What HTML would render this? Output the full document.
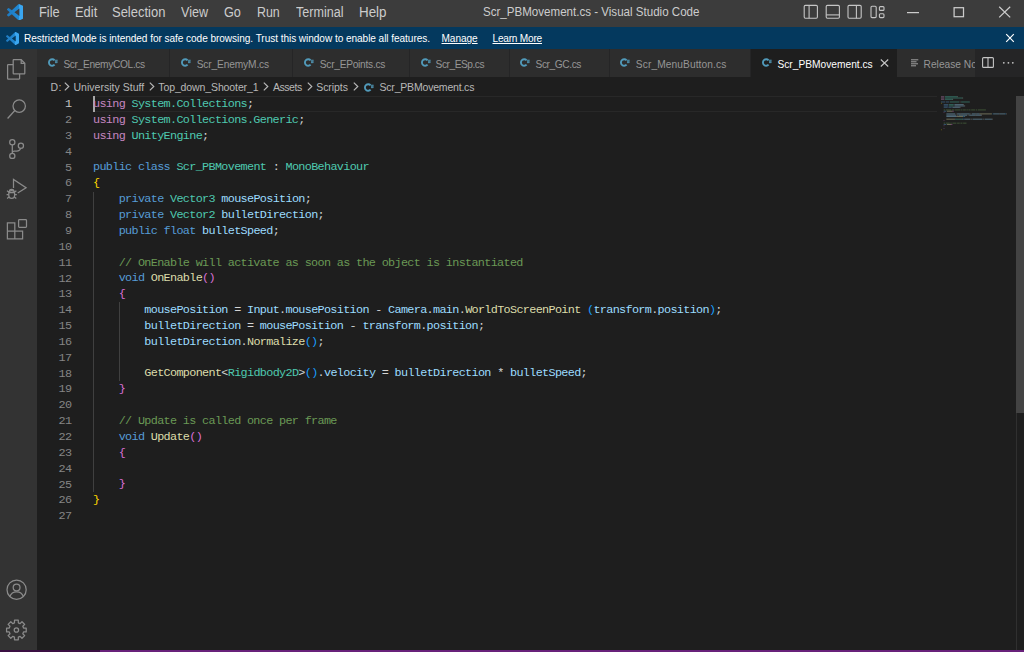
<!DOCTYPE html>
<html><head><meta charset="utf-8">
<style>
*{margin:0;padding:0;box-sizing:border-box}
html,body{width:1024px;height:652px;overflow:hidden;background:#1e1e1e;font-family:"Liberation Sans",sans-serif}
.a{position:absolute}
#title{left:0;top:0;width:1024px;height:26.5px;background:#3c3c3c}
.mi{position:absolute;top:4.5px;font-size:13.8px;color:#cccccc;line-height:16px;white-space:nowrap;transform-origin:0 0}
#banner{left:0;top:26.5px;width:1024px;height:22px;background:#04395e;color:#ffffff}
.bt{position:absolute;top:5.7px;font-size:10.1px;line-height:13px;white-space:nowrap}
#act{left:0;top:48.5px;width:37px;height:601.5px;background:#333333}
#tabs{left:37px;top:48.5px;width:987px;height:28.5px;background:#252526}
.tt{position:absolute;top:58.2px;font-size:10.2px;line-height:13px;color:#969696;white-space:nowrap}
.bc{position:absolute;top:3.5px;font-size:10.5px;line-height:13px;color:#b8b8b8;white-space:nowrap}
#bcbar .bc{top:81px}
#status{left:0;top:650px;width:1024px;height:2px;background:#68217a}
.ln{position:absolute;width:40px;left:31.3px;text-align:right;font-family:"Liberation Mono",monospace;font-size:11.8px;letter-spacing:-0.68px;line-height:15.846px}
.cl{position:absolute;left:93.0px;font-family:"Liberation Mono",monospace;font-size:11.8px;letter-spacing:-0.665px;color:#d4d4d4;line-height:15.846px;white-space:pre}
.k{color:#569cd6}.u{color:#c586c0}.t{color:#4ec9b0}.v{color:#9cdcfe}.f{color:#dcdcaa}.c{color:#6a9955}
.b1{color:#ffd700}.b2{color:#da70d6}.b3{color:#179fff}
</style></head>
<body>
<div id="title" class="a">
 <svg class="a" style="left:6.6px;top:3.8px" width="16.5" height="16.5" viewBox="0 0 100 100"><defs><linearGradient id="g6_6" x1="0" y1="0" x2="1" y2="0"><stop offset="0" stop-color="#1f7ac0"/><stop offset=".7" stop-color="#2189d4"/><stop offset=".72" stop-color="#3aa6f0"/><stop offset="1" stop-color="#3aa6f0"/></linearGradient></defs><path fill="url(#g6_6)" d="M96.46 10.8L75.86.87a6.23 6.23 0 0 0-7.1 1.2L29.35 38.04 12.19 25.01a4.16 4.16 0 0 0-5.32.24L1.36 30.26a4.16 4.16 0 0 0 0 6.16L16.24 50 1.36 63.58a4.16 4.16 0 0 0 0 6.16l5.51 5.01a4.16 4.16 0 0 0 5.32.24l17.16-13.03 39.41 35.970a6.23 6.23 0 0 0 7.1 1.2l20.6-9.92A6.25 6.25 0 0 0 100 83.6V16.4a6.25 6.25 0 0 0-3.54-5.6zM75.01 72.7L45.11 50l29.9-22.7v45.4z"/></svg>
 <span class="mi" style="left:39px;transform:scaleX(0.93)">File</span>
 <span class="mi" style="left:75px;transform:scaleX(0.935)">Edit</span>
 <span class="mi" style="left:112px;transform:scaleX(0.94)">Selection</span>
 <span class="mi" style="left:181.2px;transform:scaleX(0.91)">View</span>
 <span class="mi" style="left:224.2px;transform:scaleX(0.92)">Go</span>
 <span class="mi" style="left:256.7px;transform:scaleX(0.9)">Run</span>
 <span class="mi" style="left:296px;transform:scaleX(0.91)">Terminal</span>
 <span class="mi" style="left:359.3px;transform:scaleX(0.97)">Help</span>
 <span class="mi" style="top:3.8px;left:482.5px;font-size:12.8px;transform:scaleX(0.904)">Scr_PBMovement.cs - Visual Studio Code</span>
 
<svg class="a" style="left:803px;top:4px" width="84" height="16" viewBox="803 4 84 16" fill="none" stroke="#c5c5c5" stroke-width="1.1">
 <rect x="804.2" y="5.4" width="13.2" height="12.8" rx="1.2"/><path d="M809.1 5.4v12.8"/>
 <rect x="826.2" y="5.4" width="13.2" height="12.8" rx="1.2"/><path d="M826.2 14.9h13.2"/>
 <rect x="848.0" y="5.4" width="13.2" height="12.8" rx="1.2"/><path d="M856.4 5.4v12.8"/>
 <rect x="871.0" y="6.2" width="5.2" height="11.4" rx="1"/>
 <rect x="879.4" y="6.6" width="4.6" height="3.8" rx="1"/>
 <rect x="879.4" y="13.8" width="4.6" height="3.8" rx="1"/>
</svg>
<svg class="a" style="left:900px;top:0" width="124" height="26" viewBox="900 0 124 26" fill="none" stroke="#cccccc" stroke-width="1.25">
 <path d="M907 12.6h12"/>
 <rect x="954.1" y="7.7" width="9.4" height="9.0"/>
 <path d="M999.2 6.8l11 10.6M1010.2 6.8l-11 10.6"/>
</svg>
</div>
<div id="banner" class="a">
 <svg class="a" style="left:5.5px;top:5px" width="13" height="13" viewBox="0 0 100 100"><defs><linearGradient id="g5_5" x1="0" y1="0" x2="1" y2="0"><stop offset="0" stop-color="#1f7ac0"/><stop offset=".7" stop-color="#2189d4"/><stop offset=".72" stop-color="#3aa6f0"/><stop offset="1" stop-color="#3aa6f0"/></linearGradient></defs><path fill="url(#g5_5)" d="M96.46 10.8L75.86.87a6.23 6.23 0 0 0-7.1 1.2L29.35 38.04 12.19 25.01a4.16 4.16 0 0 0-5.32.24L1.36 30.26a4.16 4.16 0 0 0 0 6.16L16.24 50 1.36 63.58a4.16 4.16 0 0 0 0 6.16l5.51 5.01a4.16 4.16 0 0 0 5.32.24l17.16-13.03 39.41 35.970a6.23 6.23 0 0 0 7.1 1.2l20.6-9.92A6.25 6.25 0 0 0 100 83.6V16.4a6.25 6.25 0 0 0-3.54-5.6zM75.01 72.7L45.11 50l29.9-22.7v45.4z"/></svg>
 <span class="bt" style="left:24px;letter-spacing:-0.063px">Restricted Mode is intended for safe code browsing. Trust this window to enable all features.</span>
 <span class="bt" style="left:441.5px;letter-spacing:-0.06px;text-decoration:underline">Manage</span>
 <span class="bt" style="left:492.5px;letter-spacing:-0.211px;text-decoration:underline">Learn More</span>
 <svg class="a" style="left:1005px;top:6px" width="10" height="10" viewBox="0 0 10 10"><path d="M1.2 1.2l7.6 7.6M8.8 1.2l-7.6 7.6" stroke="#ffffff" stroke-width="1.2"/></svg>
</div>
<div id="act" class="a"></div>

<svg class="a" style="left:0;top:48.5px" width="37" height="200" viewBox="0 48.5 37 200" fill="none" stroke="#8b8b8b" stroke-width="1.25">
 <path d="M13 64.2H8.2a.6.6 0 0 0-.6.6v13.2a.6.6 0 0 0 .6.6h10.8a.6.6 0 0 0 .6-.6V73.6"/>
 <path d="M13.2 59.2h8l3.6 3.6v10a.6.6 0 0 1-.6.6H13.8a.6.6 0 0 1-.6-.6V59.8a.6.6 0 0 1 .6-.6z"/>
 <path d="M21.2 59.2v3.6h3.6"/>
 <circle cx="19.2" cy="105.6" r="6.2"/>
 <path d="M14.8 110L7.6 118"/>
 <circle cx="12.3" cy="141.7" r="2.6"/>
 <circle cx="12.3" cy="155.4" r="2.6"/>
 <circle cx="20.9" cy="145.3" r="2.6"/>
 <path d="M12.3 144.3v8.5M20.5 147.9c-.3 2.2-1.6 2.6-4 2.6h-2.2c-1 0-2 .8-2 2"/>
 <path d="M13.5 187.5V179l12.6 8.2-8.4 5.3"/>
 <path d="M8.8 192.4v2.6a2.9 2.9 0 0 0 5.8 0v-2.6a2.9 2.2 0 0 0-5.8 0z"/>
 <path d="M9.6 190.6a2.1 1.8 0 0 1 4.2 0M8.8 192.2h5.8M8.8 194.2H6.6M14.6 194.2h2.2M8.9 191.6L7 190.2M14.5 191.6l1.9-1.4M9 196.6l-1.9 1.4M14.4 196.6l1.9 1.4"/>
 <path d="M7.4 222.4h7.4v8.2h7.8v7.8H7.4z M7.4 230.6h7.4v7.8"/>
 <rect x="18.6" y="219.1" width="7.9" height="7.8" rx=".8"/>
</svg>
<svg class="a" style="left:0;top:570px" width="37" height="80" viewBox="0 570 37 80" fill="none" stroke="#8b8b8b" stroke-width="1.25">
 <circle cx="16.6" cy="589.7" r="9.6"/>
 <circle cx="16.6" cy="587.6" r="3.4"/>
 <path d="M9.8 596.6c1.2-3.4 3.6-4.8 6.8-4.8s5.6 1.4 6.8 4.8"/>
 <path d="M14.48 622.85 L14.49 620.18 L18.31 620.18 L18.32 622.85 L20.10 623.59 L21.99 621.71 L24.69 624.41 L22.81 626.30 L23.55 628.08 L26.22 628.09 L26.22 631.91 L23.55 631.92 L22.81 633.70 L24.69 635.59 L21.99 638.29 L20.10 636.41 L18.32 637.15 L18.31 639.82 L14.49 639.82 L14.48 637.15 L12.70 636.41 L10.81 638.29 L8.11 635.59 L9.99 633.70 L9.25 631.92 L6.58 631.91 L6.58 628.09 L9.25 628.08 L9.99 626.30 L8.11 624.41 L10.81 621.71 L12.70 623.59Z" stroke-linejoin="round"/>
 <circle cx="16.4" cy="630" r="2.2"/>
</svg>
<div id="tabs" class="a"></div>
<div class="a" style="left:37px;top:48.5px;width:132px;height:28.5px;background:#2d2d2d"></div>
<svg class="a" style="left:48.0px;top:58.3px" width="10" height="9" viewBox="0 0 10 9"><path d="M6.6 2.3A3.25 3.25 0 1 0 6.6 6.7" fill="none" stroke="#519aba" stroke-width="1.9"/><path d="M7.0 2.9h2.6M7.0 4.3h2.6M7.9 1.6l-.3 3.6M9.0 1.6l-.3 3.6" stroke="#519aba" stroke-width=".75"/></svg>
<span class="tt" style="left:63.4px;letter-spacing:-0.343px">Scr_EnemyCOL.cs</span>
<div class="a" style="left:170px;top:48.5px;width:122px;height:28.5px;background:#2d2d2d"></div>
<svg class="a" style="left:181.20000000000002px;top:58.3px" width="10" height="9" viewBox="0 0 10 9"><path d="M6.6 2.3A3.25 3.25 0 1 0 6.6 6.7" fill="none" stroke="#519aba" stroke-width="1.9"/><path d="M7.0 2.9h2.6M7.0 4.3h2.6M7.9 1.6l-.3 3.6M9.0 1.6l-.3 3.6" stroke="#519aba" stroke-width=".75"/></svg>
<span class="tt" style="left:196.7px;letter-spacing:-0.142px">Scr_EnemyM.cs</span>
<div class="a" style="left:293px;top:48.5px;width:116px;height:28.5px;background:#2d2d2d"></div>
<svg class="a" style="left:304.40000000000003px;top:58.3px" width="10" height="9" viewBox="0 0 10 9"><path d="M6.6 2.3A3.25 3.25 0 1 0 6.6 6.7" fill="none" stroke="#519aba" stroke-width="1.9"/><path d="M7.0 2.9h2.6M7.0 4.3h2.6M7.9 1.6l-.3 3.6M9.0 1.6l-.3 3.6" stroke="#519aba" stroke-width=".75"/></svg>
<span class="tt" style="left:319.8px;letter-spacing:-0.269px">Scr_EPoints.cs</span>
<div class="a" style="left:410px;top:48.5px;width:99px;height:28.5px;background:#2d2d2d"></div>
<svg class="a" style="left:420.7px;top:58.3px" width="10" height="9" viewBox="0 0 10 9"><path d="M6.6 2.3A3.25 3.25 0 1 0 6.6 6.7" fill="none" stroke="#519aba" stroke-width="1.9"/><path d="M7.0 2.9h2.6M7.0 4.3h2.6M7.9 1.6l-.3 3.6M9.0 1.6l-.3 3.6" stroke="#519aba" stroke-width=".75"/></svg>
<span class="tt" style="left:435.6px;letter-spacing:-0.478px">Scr_ESp.cs</span>
<div class="a" style="left:510px;top:48.5px;width:99px;height:28.5px;background:#2d2d2d"></div>
<svg class="a" style="left:520.0999999999999px;top:58.3px" width="10" height="9" viewBox="0 0 10 9"><path d="M6.6 2.3A3.25 3.25 0 1 0 6.6 6.7" fill="none" stroke="#519aba" stroke-width="1.9"/><path d="M7.0 2.9h2.6M7.0 4.3h2.6M7.9 1.6l-.3 3.6M9.0 1.6l-.3 3.6" stroke="#519aba" stroke-width=".75"/></svg>
<span class="tt" style="left:535.5px;letter-spacing:-0.412px">Scr_GC.cs</span>
<div class="a" style="left:610px;top:48.5px;width:140px;height:28.5px;background:#2d2d2d"></div>
<svg class="a" style="left:620.4px;top:58.3px" width="10" height="9" viewBox="0 0 10 9"><path d="M6.6 2.3A3.25 3.25 0 1 0 6.6 6.7" fill="none" stroke="#519aba" stroke-width="1.9"/><path d="M7.0 2.9h2.6M7.0 4.3h2.6M7.9 1.6l-.3 3.6M9.0 1.6l-.3 3.6" stroke="#519aba" stroke-width=".75"/></svg>
<span class="tt" style="left:635.8px;letter-spacing:0.1px">Scr_MenuButton.cs</span>
<div class="a" style="left:750.5px;top:48.5px;width:146px;height:28.5px;background:#1e1e1e"></div>
<svg class="a" style="left:762px;top:58.3px" width="10" height="9" viewBox="0 0 10 9"><path d="M6.6 2.3A3.25 3.25 0 1 0 6.6 6.7" fill="none" stroke="#519aba" stroke-width="1.9"/><path d="M7.0 2.9h2.6M7.0 4.3h2.6M7.9 1.6l-.3 3.6M9.0 1.6l-.3 3.6" stroke="#519aba" stroke-width=".75"/></svg>
<span class="tt" style="left:777.4px;color:#ffffff;letter-spacing:0.013px">Scr_PBMovement.cs</span>
<svg class="a" style="left:879.5px;top:58.5px" width="9" height="8" viewBox="0 0 9 8"><path d="M0.8 0.5L8.2 7.5M8.2 0.5L0.8 7.5" stroke="#c5c5c5" stroke-width="1.1"/></svg>
<div class="a" style="left:897px;top:48.5px;width:78px;height:28.5px;background:#2d2d2d;overflow:hidden"><svg class="a" style="left:13.5px;top:10px" width="8" height="8" viewBox="0 0 8 8"><path d="M0 .8h7.3M0 2.8h5.5M0 4.8h7M0 6.8h5" stroke="#a0a0a0" stroke-width="1"/></svg><span class="tt" style="left:26.6px;top:9.1px">Release Notes: 1.62.3</span></div>
<svg class="a" style="left:981.5px;top:57px" width="12" height="11" viewBox="0 0 12 11"><rect x=".6" y=".6" width="10.8" height="9.8" rx="1" fill="none" stroke="#c5c5c5" stroke-width="1.1"/><path d="M6 .6v9.8" stroke="#c5c5c5" stroke-width="1.1"/></svg>
<svg class="a" style="left:1002px;top:61px" width="13" height="4" viewBox="0 0 13 4"><circle cx="1.8" cy="1.8" r=".9" fill="#c5c5c5"/><circle cx="6.4" cy="1.8" r=".9" fill="#c5c5c5"/><circle cx="10.8" cy="1.8" r=".9" fill="#c5c5c5"/></svg>
<div id="bcbar">
<span class="bc" style="left:50.5px;letter-spacing:0.3px">D:</span>
<svg class="a" style="left:64px;top:82px" width="6" height="9" viewBox="0 0 6 9"><path d="M.8 .6L4.8 4.5L.8 8.4" fill="none" stroke="#b8b8b8" stroke-width="1.15"/></svg>
<span class="bc" style="left:73.5px;letter-spacing:0.02px">University Stuff</span>
<svg class="a" style="left:149px;top:82px" width="6" height="9" viewBox="0 0 6 9"><path d="M.8 .6L4.8 4.5L.8 8.4" fill="none" stroke="#b8b8b8" stroke-width="1.15"/></svg>
<span class="bc" style="left:158.3px;letter-spacing:-0.112px">Top_down_Shooter_1</span>
<svg class="a" style="left:262.7px;top:82px" width="6" height="9" viewBox="0 0 6 9"><path d="M.8 .6L4.8 4.5L.8 8.4" fill="none" stroke="#b8b8b8" stroke-width="1.15"/></svg>
<span class="bc" style="left:272.9px;letter-spacing:-0.44px">Assets</span>
<svg class="a" style="left:307.3px;top:82px" width="6" height="9" viewBox="0 0 6 9"><path d="M.8 .6L4.8 4.5L.8 8.4" fill="none" stroke="#b8b8b8" stroke-width="1.15"/></svg>
<span class="bc" style="left:316.2px;letter-spacing:-0.05px">Scripts</span>
<svg class="a" style="left:352.6px;top:82px" width="6" height="9" viewBox="0 0 6 9"><path d="M.8 .6L4.8 4.5L.8 8.4" fill="none" stroke="#b8b8b8" stroke-width="1.15"/></svg>
<span class="bc" style="left:379.5px;letter-spacing:-0.194px">Scr_PBMovement.cs</span>
<svg class="a" style="left:364.3px;top:82.5px" width="10" height="9" viewBox="0 0 10 9"><path d="M6.6 2.3A3.25 3.25 0 1 0 6.6 6.7" fill="none" stroke="#519aba" stroke-width="1.9"/><path d="M7.0 2.9h2.6M7.0 4.3h2.6M7.9 1.6l-.3 3.6M9.0 1.6l-.3 3.6" stroke="#519aba" stroke-width=".75"/></svg>
</div>
<div id="editor">
<div class="a" style="left:93px;top:96.2px;width:844px;height:15.6px;border-top:1px solid #282828;border-bottom:1px solid #282828"></div>
<div class="a" style="left:93.2px;top:96px;width:1.6px;height:16px;background:#a8a8a8"></div>
<div class="a" style="left:93.3px;top:191.5px;width:1px;height:300px;background:#404040"></div>
<div class="a" style="left:118.9px;top:302px;width:1px;height:79px;background:#404040"></div>

<div class="ln" style="top:97.20px;color:#c6c6c6">1</div>
<div class="cl" style="top:97.10px"><span class="u">using</span> <span class="t">System.Collections</span>;</div>
<div class="ln" style="top:113.05px;color:#858585">2</div>
<div class="cl" style="top:112.95px"><span class="u">using</span> <span class="t">System.Collections.Generic</span>;</div>
<div class="ln" style="top:128.89px;color:#858585">3</div>
<div class="cl" style="top:128.79px"><span class="u">using</span> <span class="t">UnityEngine</span>;</div>
<div class="ln" style="top:144.74px;color:#858585">4</div>
<div class="ln" style="top:160.58px;color:#858585">5</div>
<div class="cl" style="top:160.48px"><span class="k">public</span> <span class="k">class</span> <span class="t">Scr_PBMovement</span> : <span class="t">MonoBehaviour</span></div>
<div class="ln" style="top:176.43px;color:#858585">6</div>
<div class="cl" style="top:176.33px"><span class="b1">{</span></div>
<div class="ln" style="top:192.28px;color:#858585">7</div>
<div class="cl" style="top:192.18px">    <span class="k">private</span> <span class="t">Vector3</span> <span class="v">mousePosition</span>;</div>
<div class="ln" style="top:208.12px;color:#858585">8</div>
<div class="cl" style="top:208.02px">    <span class="k">private</span> <span class="t">Vector2</span> <span class="v">bulletDirection</span>;</div>
<div class="ln" style="top:223.97px;color:#858585">9</div>
<div class="cl" style="top:223.87px">    <span class="k">public</span> <span class="k">float</span> <span class="v">bulletSpeed</span>;</div>
<div class="ln" style="top:239.81px;color:#858585">10</div>
<div class="ln" style="top:255.66px;color:#858585">11</div>
<div class="cl" style="top:255.56px">    <span class="c">// OnEnable will activate as soon as the object is instantiated</span></div>
<div class="ln" style="top:271.51px;color:#858585">12</div>
<div class="cl" style="top:271.41px">    <span class="k">void</span> <span class="f">OnEnable</span><span class="b2">()</span></div>
<div class="ln" style="top:287.35px;color:#858585">13</div>
<div class="cl" style="top:287.25px">    <span class="b2">{</span></div>
<div class="ln" style="top:303.20px;color:#858585">14</div>
<div class="cl" style="top:303.10px">        <span class="v">mousePosition</span> = <span class="v">Input</span>.<span class="v">mousePosition</span> - <span class="v">Camera</span>.<span class="v">main</span>.<span class="f">WorldToScreenPoint</span> <span class="b3">(</span><span class="v">transform</span>.<span class="v">position</span><span class="b3">)</span>;</div>
<div class="ln" style="top:319.04px;color:#858585">15</div>
<div class="cl" style="top:318.94px">        <span class="v">bulletDirection</span> = <span class="v">mousePosition</span> - <span class="v">transform</span>.<span class="v">position</span>;</div>
<div class="ln" style="top:334.89px;color:#858585">16</div>
<div class="cl" style="top:334.79px">        <span class="v">bulletDirection</span>.<span class="f">Normalize</span><span class="b3">()</span>;</div>
<div class="ln" style="top:350.74px;color:#858585">17</div>
<div class="ln" style="top:366.58px;color:#858585">18</div>
<div class="cl" style="top:366.48px">        <span class="f">GetComponent</span>&lt;<span class="t">Rigidbody2D</span>&gt;<span class="b3">()</span>.<span class="v">velocity</span> = <span class="v">bulletDirection</span> * <span class="v">bulletSpeed</span>;</div>
<div class="ln" style="top:382.43px;color:#858585">19</div>
<div class="cl" style="top:382.33px">    <span class="b2">}</span></div>
<div class="ln" style="top:398.27px;color:#858585">20</div>
<div class="ln" style="top:414.12px;color:#858585">21</div>
<div class="cl" style="top:414.02px">    <span class="c">// Update is called once per frame</span></div>
<div class="ln" style="top:429.97px;color:#858585">22</div>
<div class="cl" style="top:429.87px">    <span class="k">void</span> <span class="f">Update</span><span class="b2">()</span></div>
<div class="ln" style="top:445.81px;color:#858585">23</div>
<div class="cl" style="top:445.71px">    <span class="b2">{</span></div>
<div class="ln" style="top:461.66px;color:#858585">24</div>
<div class="ln" style="top:477.50px;color:#858585">25</div>
<div class="cl" style="top:477.40px">    <span class="b2">}</span></div>
<div class="ln" style="top:493.35px;color:#858585">26</div>
<div class="cl" style="top:493.25px"><span class="b1">}</span></div>
<div class="ln" style="top:509.20px;color:#858585">27</div>
<svg class="a" style="left:0;top:0" width="1024" height="652" viewBox="0 0 1024 652">
<rect x="941.00" y="96.20" width="3.35" height="1.0" fill="#c586c0" fill-opacity=".42"/>
<rect x="945.02" y="96.20" width="12.06" height="1.0" fill="#4ec9b0" fill-opacity=".42"/>
<rect x="957.08" y="96.20" width="0.67" height="1.0" fill="#d4d4d4" fill-opacity=".42"/>
<rect x="941.00" y="97.52" width="3.35" height="1.0" fill="#c586c0" fill-opacity=".42"/>
<rect x="945.02" y="97.52" width="17.42" height="1.0" fill="#4ec9b0" fill-opacity=".42"/>
<rect x="962.44" y="97.52" width="0.67" height="1.0" fill="#d4d4d4" fill-opacity=".42"/>
<rect x="941.00" y="98.84" width="3.35" height="1.0" fill="#c586c0" fill-opacity=".42"/>
<rect x="945.02" y="98.84" width="7.37" height="1.0" fill="#4ec9b0" fill-opacity=".42"/>
<rect x="952.39" y="98.84" width="0.67" height="1.0" fill="#d4d4d4" fill-opacity=".42"/>
<rect x="941.00" y="101.49" width="4.02" height="1.0" fill="#569cd6" fill-opacity=".42"/>
<rect x="945.69" y="101.49" width="3.35" height="1.0" fill="#569cd6" fill-opacity=".42"/>
<rect x="949.71" y="101.49" width="9.38" height="1.0" fill="#4ec9b0" fill-opacity=".42"/>
<rect x="959.76" y="101.49" width="0.67" height="1.0" fill="#d4d4d4" fill-opacity=".42"/>
<rect x="961.10" y="101.49" width="8.71" height="1.0" fill="#4ec9b0" fill-opacity=".42"/>
<rect x="941.00" y="102.81" width="0.67" height="1.0" fill="#ffd700" fill-opacity=".42"/>
<rect x="943.68" y="104.13" width="4.69" height="1.0" fill="#569cd6" fill-opacity=".42"/>
<rect x="949.04" y="104.13" width="4.69" height="1.0" fill="#4ec9b0" fill-opacity=".42"/>
<rect x="954.40" y="104.13" width="8.71" height="1.0" fill="#9cdcfe" fill-opacity=".42"/>
<rect x="963.11" y="104.13" width="0.67" height="1.0" fill="#d4d4d4" fill-opacity=".42"/>
<rect x="943.68" y="105.45" width="4.69" height="1.0" fill="#569cd6" fill-opacity=".42"/>
<rect x="949.04" y="105.45" width="4.69" height="1.0" fill="#4ec9b0" fill-opacity=".42"/>
<rect x="954.40" y="105.45" width="10.05" height="1.0" fill="#9cdcfe" fill-opacity=".42"/>
<rect x="964.45" y="105.45" width="0.67" height="1.0" fill="#d4d4d4" fill-opacity=".42"/>
<rect x="943.68" y="106.78" width="4.02" height="1.0" fill="#569cd6" fill-opacity=".42"/>
<rect x="948.37" y="106.78" width="3.35" height="1.0" fill="#569cd6" fill-opacity=".42"/>
<rect x="952.39" y="106.78" width="7.37" height="1.0" fill="#9cdcfe" fill-opacity=".42"/>
<rect x="959.76" y="106.78" width="0.67" height="1.0" fill="#d4d4d4" fill-opacity=".42"/>
<rect x="943.68" y="109.42" width="1.34" height="1.0" fill="#6a9955" fill-opacity=".42"/>
<rect x="945.69" y="109.42" width="5.36" height="1.0" fill="#6a9955" fill-opacity=".42"/>
<rect x="951.72" y="109.42" width="2.68" height="1.0" fill="#6a9955" fill-opacity=".42"/>
<rect x="955.07" y="109.42" width="5.36" height="1.0" fill="#6a9955" fill-opacity=".42"/>
<rect x="961.10" y="109.42" width="1.34" height="1.0" fill="#6a9955" fill-opacity=".42"/>
<rect x="963.11" y="109.42" width="2.68" height="1.0" fill="#6a9955" fill-opacity=".42"/>
<rect x="966.46" y="109.42" width="1.34" height="1.0" fill="#6a9955" fill-opacity=".42"/>
<rect x="968.47" y="109.42" width="2.01" height="1.0" fill="#6a9955" fill-opacity=".42"/>
<rect x="971.15" y="109.42" width="4.02" height="1.0" fill="#6a9955" fill-opacity=".42"/>
<rect x="975.84" y="109.42" width="1.34" height="1.0" fill="#6a9955" fill-opacity=".42"/>
<rect x="977.85" y="109.42" width="8.04" height="1.0" fill="#6a9955" fill-opacity=".42"/>
<rect x="943.68" y="110.74" width="2.68" height="1.0" fill="#569cd6" fill-opacity=".42"/>
<rect x="947.03" y="110.74" width="5.36" height="1.0" fill="#dcdcaa" fill-opacity=".42"/>
<rect x="952.39" y="110.74" width="1.34" height="1.0" fill="#da70d6" fill-opacity=".42"/>
<rect x="943.68" y="112.06" width="0.67" height="1.0" fill="#da70d6" fill-opacity=".42"/>
<rect x="946.36" y="113.39" width="8.71" height="1.0" fill="#9cdcfe" fill-opacity=".42"/>
<rect x="955.74" y="113.39" width="0.67" height="1.0" fill="#d4d4d4" fill-opacity=".42"/>
<rect x="957.08" y="113.39" width="3.35" height="1.0" fill="#9cdcfe" fill-opacity=".42"/>
<rect x="960.43" y="113.39" width="0.67" height="1.0" fill="#d4d4d4" fill-opacity=".42"/>
<rect x="961.10" y="113.39" width="8.71" height="1.0" fill="#9cdcfe" fill-opacity=".42"/>
<rect x="970.48" y="113.39" width="0.67" height="1.0" fill="#d4d4d4" fill-opacity=".42"/>
<rect x="971.82" y="113.39" width="4.02" height="1.0" fill="#9cdcfe" fill-opacity=".42"/>
<rect x="975.84" y="113.39" width="0.67" height="1.0" fill="#d4d4d4" fill-opacity=".42"/>
<rect x="976.51" y="113.39" width="2.68" height="1.0" fill="#9cdcfe" fill-opacity=".42"/>
<rect x="979.19" y="113.39" width="0.67" height="1.0" fill="#d4d4d4" fill-opacity=".42"/>
<rect x="979.86" y="113.39" width="12.06" height="1.0" fill="#dcdcaa" fill-opacity=".42"/>
<rect x="992.59" y="113.39" width="0.67" height="1.0" fill="#179fff" fill-opacity=".42"/>
<rect x="993.26" y="113.39" width="6.03" height="1.0" fill="#9cdcfe" fill-opacity=".42"/>
<rect x="999.29" y="113.39" width="0.67" height="1.0" fill="#d4d4d4" fill-opacity=".42"/>
<rect x="999.96" y="113.39" width="5.36" height="1.0" fill="#9cdcfe" fill-opacity=".42"/>
<rect x="1005.32" y="113.39" width="0.67" height="1.0" fill="#179fff" fill-opacity=".42"/>
<rect x="1005.99" y="113.39" width="0.67" height="1.0" fill="#d4d4d4" fill-opacity=".42"/>
<rect x="946.36" y="114.71" width="10.05" height="1.0" fill="#9cdcfe" fill-opacity=".42"/>
<rect x="957.08" y="114.71" width="0.67" height="1.0" fill="#d4d4d4" fill-opacity=".42"/>
<rect x="958.42" y="114.71" width="8.71" height="1.0" fill="#9cdcfe" fill-opacity=".42"/>
<rect x="967.80" y="114.71" width="0.67" height="1.0" fill="#d4d4d4" fill-opacity=".42"/>
<rect x="969.14" y="114.71" width="6.03" height="1.0" fill="#9cdcfe" fill-opacity=".42"/>
<rect x="975.17" y="114.71" width="0.67" height="1.0" fill="#d4d4d4" fill-opacity=".42"/>
<rect x="975.84" y="114.71" width="5.36" height="1.0" fill="#9cdcfe" fill-opacity=".42"/>
<rect x="981.20" y="114.71" width="0.67" height="1.0" fill="#d4d4d4" fill-opacity=".42"/>
<rect x="946.36" y="116.03" width="10.05" height="1.0" fill="#9cdcfe" fill-opacity=".42"/>
<rect x="956.41" y="116.03" width="0.67" height="1.0" fill="#d4d4d4" fill-opacity=".42"/>
<rect x="957.08" y="116.03" width="6.03" height="1.0" fill="#dcdcaa" fill-opacity=".42"/>
<rect x="963.11" y="116.03" width="1.34" height="1.0" fill="#179fff" fill-opacity=".42"/>
<rect x="964.45" y="116.03" width="0.67" height="1.0" fill="#d4d4d4" fill-opacity=".42"/>
<rect x="946.36" y="118.67" width="8.04" height="1.0" fill="#dcdcaa" fill-opacity=".42"/>
<rect x="954.40" y="118.67" width="0.67" height="1.0" fill="#d4d4d4" fill-opacity=".42"/>
<rect x="955.07" y="118.67" width="7.37" height="1.0" fill="#4ec9b0" fill-opacity=".42"/>
<rect x="962.44" y="118.67" width="0.67" height="1.0" fill="#d4d4d4" fill-opacity=".42"/>
<rect x="963.11" y="118.67" width="1.34" height="1.0" fill="#179fff" fill-opacity=".42"/>
<rect x="964.45" y="118.67" width="0.67" height="1.0" fill="#d4d4d4" fill-opacity=".42"/>
<rect x="965.12" y="118.67" width="5.36" height="1.0" fill="#9cdcfe" fill-opacity=".42"/>
<rect x="971.15" y="118.67" width="0.67" height="1.0" fill="#d4d4d4" fill-opacity=".42"/>
<rect x="972.49" y="118.67" width="10.05" height="1.0" fill="#9cdcfe" fill-opacity=".42"/>
<rect x="983.21" y="118.67" width="0.67" height="1.0" fill="#d4d4d4" fill-opacity=".42"/>
<rect x="984.55" y="118.67" width="7.37" height="1.0" fill="#9cdcfe" fill-opacity=".42"/>
<rect x="991.92" y="118.67" width="0.67" height="1.0" fill="#d4d4d4" fill-opacity=".42"/>
<rect x="943.68" y="120.00" width="0.67" height="1.0" fill="#da70d6" fill-opacity=".42"/>
<rect x="943.68" y="122.64" width="1.34" height="1.0" fill="#6a9955" fill-opacity=".42"/>
<rect x="945.69" y="122.64" width="4.02" height="1.0" fill="#6a9955" fill-opacity=".42"/>
<rect x="950.38" y="122.64" width="1.34" height="1.0" fill="#6a9955" fill-opacity=".42"/>
<rect x="952.39" y="122.64" width="4.02" height="1.0" fill="#6a9955" fill-opacity=".42"/>
<rect x="957.08" y="122.64" width="2.68" height="1.0" fill="#6a9955" fill-opacity=".42"/>
<rect x="960.43" y="122.64" width="2.01" height="1.0" fill="#6a9955" fill-opacity=".42"/>
<rect x="963.11" y="122.64" width="3.35" height="1.0" fill="#6a9955" fill-opacity=".42"/>
<rect x="943.68" y="123.96" width="2.68" height="1.0" fill="#569cd6" fill-opacity=".42"/>
<rect x="947.03" y="123.96" width="4.02" height="1.0" fill="#dcdcaa" fill-opacity=".42"/>
<rect x="951.05" y="123.96" width="1.34" height="1.0" fill="#da70d6" fill-opacity=".42"/>
<rect x="943.68" y="125.28" width="0.67" height="1.0" fill="#da70d6" fill-opacity=".42"/>
<rect x="943.68" y="127.93" width="0.67" height="1.0" fill="#da70d6" fill-opacity=".42"/>
<rect x="941.00" y="129.25" width="0.67" height="1.0" fill="#ffd700" fill-opacity=".42"/>
</svg>
<div class="a" style="left:1016px;top:96px;width:1px;height:554px;background:#303030"></div>
<div class="a" style="left:1016px;top:96px;width:8px;height:317px;background:#434343"></div>
</div>
<div id="status" class="a"><div class="a" style="left:0;top:0;width:100px;height:2px;background:#3a0f42"></div></div>
</body></html>
